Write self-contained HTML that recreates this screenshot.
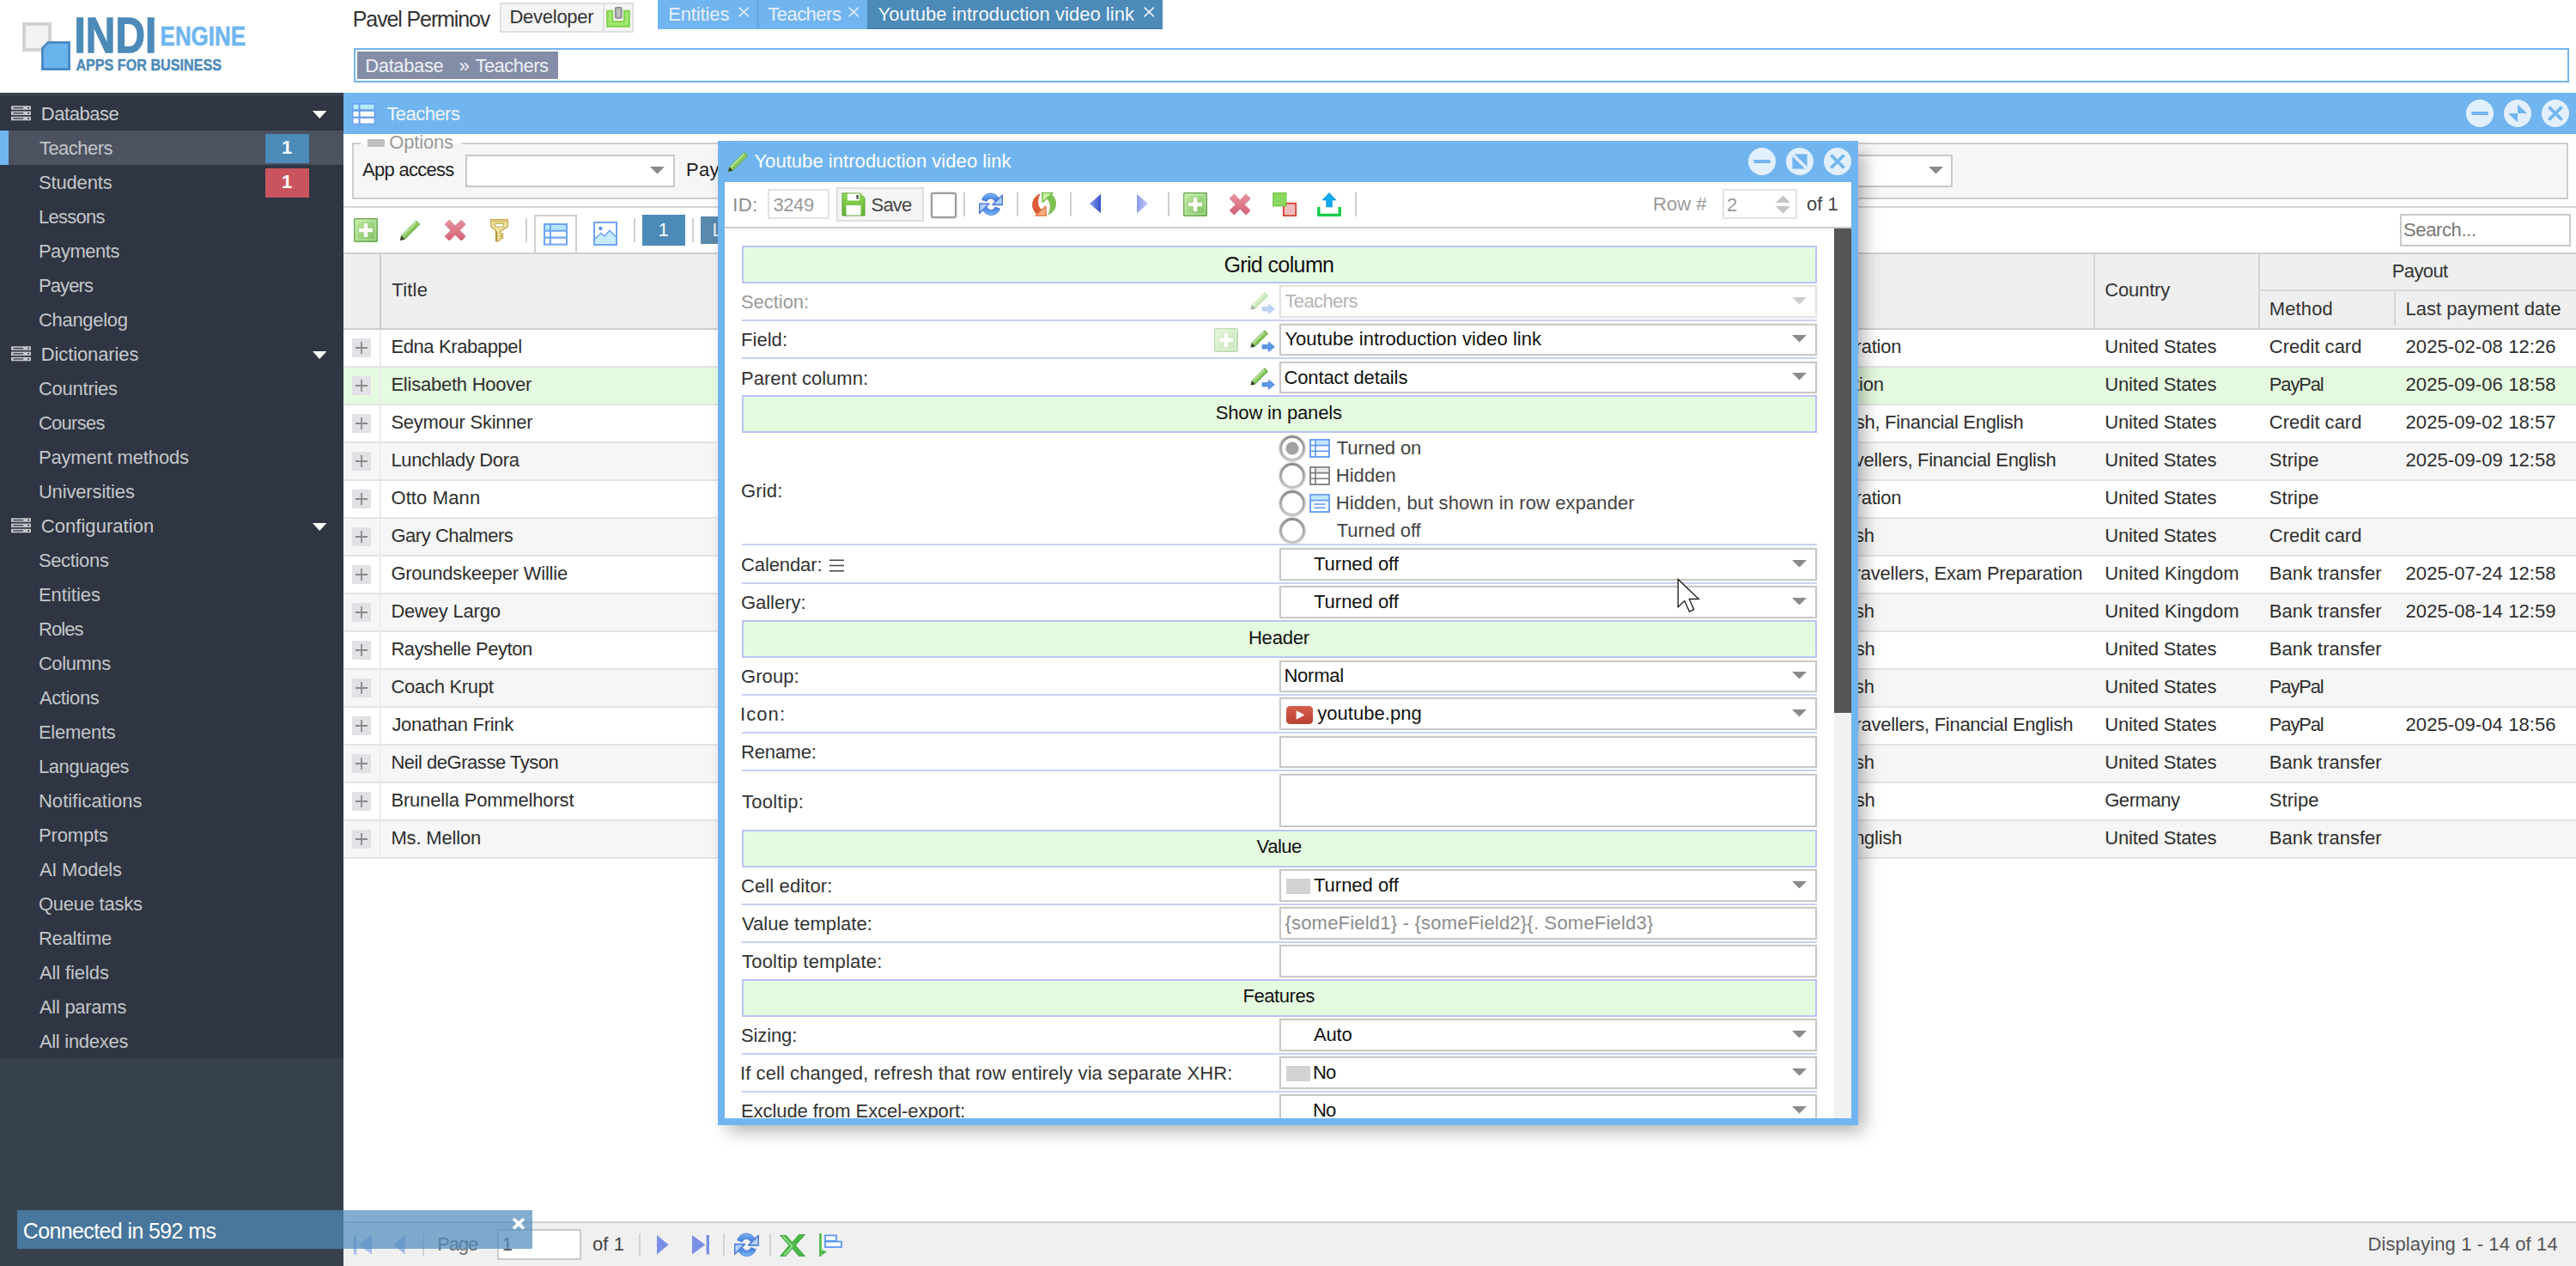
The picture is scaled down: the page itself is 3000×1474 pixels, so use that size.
<!DOCTYPE html>
<html><head><meta charset="utf-8"><title>Teachers</title><style>
html,body{margin:0;padding:0}
body{width:3000px;height:1474px;overflow:hidden;position:relative;background:#fff;font-family:"Liberation Sans", sans-serif;font-size:21px;color:#222}
div,svg{position:absolute;box-sizing:border-box}
.t{white-space:nowrap}
</style></head><body>
<svg width="0" height="0" style="left:0;top:0"><defs>
<linearGradient id="gAdd" x1="0" y1="0" x2="1" y2="1"><stop offset="0" stop-color="#c4efa6"/><stop offset="1" stop-color="#79bd5c"/></linearGradient>
<linearGradient id="gX" x1="0" y1="0" x2="0" y2="1"><stop offset="0" stop-color="#e58a98"/><stop offset="1" stop-color="#cf4e62"/></linearGradient>
<linearGradient id="gPen" x1="0" y1="0" x2="1" y2="1"><stop offset="0" stop-color="#a6e07a"/><stop offset="1" stop-color="#6cb044"/></linearGradient>
<linearGradient id="gKey" x1="0" y1="0" x2="1" y2="1"><stop offset="0" stop-color="#ecd58a"/><stop offset="1" stop-color="#b8964a"/></linearGradient>
<linearGradient id="gSave" x1="0" y1="0" x2="0" y2="1"><stop offset="0" stop-color="#8fdc5a"/><stop offset="1" stop-color="#5fb030"/></linearGradient>
<linearGradient id="gRef" x1="0" y1="0" x2="0" y2="1"><stop offset="0" stop-color="#7ab8f5"/><stop offset="1" stop-color="#3a78dc"/></linearGradient>
<linearGradient id="gTriL" x1="0" y1="0" x2="1" y2="0"><stop offset="0" stop-color="#8aa0ee"/><stop offset="1" stop-color="#3050c8"/></linearGradient>
<linearGradient id="gTriR" x1="0" y1="0" x2="1" y2="0"><stop offset="0" stop-color="#8898ea"/><stop offset="1" stop-color="#c4cef8"/></linearGradient>
<linearGradient id="gRadio" x1="0" y1="0" x2="0" y2="1"><stop offset="0" stop-color="#8c8c8c"/><stop offset="1" stop-color="#c4c4c4"/></linearGradient>
<linearGradient id="gYt" x1="0" y1="0" x2="0" y2="1"><stop offset="0" stop-color="#d4604e"/><stop offset="1" stop-color="#bb3f33"/></linearGradient>
</defs></svg>
<svg style="left:20px;top:15px;" width="280" height="75" viewBox="0 0 280 75" preserveAspectRatio="none"><rect x="8" y="13" width="30" height="30" fill="#f2f2f2" stroke="#d2d2d2" stroke-width="4"/><path d="M36 34.5 H60.5 V65.5 H29.5 V41 Z" fill="#6ab4ee" stroke="#4c8cc4" stroke-width="3" stroke-linejoin="miter"/><text x="66.6" y="46.4" font-family="Liberation Sans" font-weight="bold" font-size="56.8" fill="#4c8ab8" stroke="#4c8ab8" stroke-width="1.3" textLength="95.6" lengthAdjust="spacingAndGlyphs">INDI</text><text x="166.6" y="38.4" font-family="Liberation Sans" font-weight="bold" font-size="31.5" fill="#6eb6f0" stroke="#6eb6f0" stroke-width=".5" textLength="99.4" lengthAdjust="spacingAndGlyphs">ENGINE</text><text x="68.4" y="66.7" font-family="Liberation Sans" font-weight="bold" font-size="18.7" fill="#4c8ab8" stroke="#4c8ab8" stroke-width=".4" textLength="169.6" lengthAdjust="spacingAndGlyphs">APPS FOR BUSINESS</text></svg>
<div class="t" style="top:7.0px;line-height:30px;font-size:25px;color:#333;letter-spacing:-1.121px;left:410.8px;">Pavel Perminov</div>
<div style="left:582px;top:2.5px;width:156px;height:35.5px;background:#f5f5f5;border:2px solid #e0e0e0;"></div>
<div style="left:702px;top:4px;width:2px;height:32.5px;background:#e0e0e0;"></div>
<div class="t" style="top:7.2px;line-height:26px;font-size:22px;color:#333;letter-spacing:-0.269px;left:593.5px;">Developer</div>
<svg style="left:705.9px;top:7.8px;" width="28" height="24" viewBox="0 0 28 24" preserveAspectRatio="none"><path d="M0.8 4.4 H7.6 V16.8 H20.6 V4.4 H27.2 V23.2 H0.8 Z" fill="#8ede58" stroke="#7cd048" stroke-width="1.2" stroke-linejoin="round"/><path d="M3 6.4 H5.6 V19 H22.6 V6.4 H25 V21 H3 Z" fill="#b2f08a" opacity=".7"/><rect x="10.4" y="0.5" width="7.8" height="12.8" rx="1" fill="#a4a4a4" stroke="#848484" stroke-width="1"/><rect x="12.6" y="2.4" width="3.4" height="9" fill="#c4c4c4"/></svg>
<div style="left:766px;top:0px;width:115px;height:33.6px;background:#71b5f0;"></div>
<div style="left:883.5px;top:0px;width:126px;height:33.6px;background:#71b5f0;"></div>
<div style="left:881px;top:0px;width:2.5px;height:33.6px;background:#68a8e2;"></div>
<div style="left:1009.5px;top:0px;width:344.5px;height:33.6px;background:#4c8ab8;"></div>
<div style="left:1009.5px;top:32.8px;width:344.5px;height:1px;background:#4478a4;"></div>
<div class="t" style="top:3.5px;line-height:26px;font-size:22px;color:#e8f0f8;letter-spacing:-0.135px;left:778.2px;">Entities</div>
<svg style="left:859.5px;top:8.1px;" width="12.6" height="12" viewBox="0 0 12.6 12" preserveAspectRatio="none"><path d="M0.6 0.6 L12 11.4 M12 0.6 L0.6 11.4" stroke="#e0ecf8" stroke-width="1.6" fill="none"/></svg>
<div class="t" style="top:3.5px;line-height:26px;font-size:22px;color:#e8f0f8;letter-spacing:-0.51px;left:894.2px;">Teachers</div>
<svg style="left:987.8px;top:8.1px;" width="12.6" height="12" viewBox="0 0 12.6 12" preserveAspectRatio="none"><path d="M0.6 0.6 L12 11.4 M12 0.6 L0.6 11.4" stroke="#e0ecf8" stroke-width="1.6" fill="none"/></svg>
<div class="t" style="top:3.5px;line-height:26px;font-size:22px;color:#f4f8fc;letter-spacing:0.026px;left:1022.5px;">Youtube introduction video link</div>
<svg style="left:1331.8px;top:8.1px;" width="12.6" height="12" viewBox="0 0 12.6 12" preserveAspectRatio="none"><path d="M0.6 0.6 L12 11.4 M12 0.6 L0.6 11.4" stroke="#f0f4fa" stroke-width="1.6" fill="none"/></svg>
<div style="left:411.5px;top:56px;width:2580.5px;height:40px;border:2px solid #71b5f0;background:#fff;"></div>
<div style="left:416.2px;top:60.2px;width:233.6px;height:31.6px;background:#848da8;"></div>
<div class="t" style="top:64.0px;line-height:26px;font-size:22px;color:#eef0f4;letter-spacing:-0.392px;left:425.3px;">Database</div>
<div class="t" style="top:64.0px;line-height:26px;font-size:22px;color:#eef0f4;left:534.6px;">»</div>
<div class="t" style="top:64.0px;line-height:26px;font-size:22px;color:#eef0f4;letter-spacing:-0.51px;left:553.4px;">Teachers</div>
<div style="left:0px;top:108px;width:400px;height:1366px;background:#37414e;"></div>
<div style="left:0px;top:108px;width:400px;height:1124px;background:#2f3542;"></div>
<div style="left:0px;top:108px;width:400px;height:4px;background:#37404d;"></div>
<svg style="left:12.6px;top:122.6px;" width="23" height="18" viewBox="0 0 23 18" preserveAspectRatio="none"><rect x="0" y="0.3" width="23" height="4.5" rx=".5" fill="#c6c8cc"/><rect x="2.3" y="1.85" width="11.9" height="1.4" fill="#3a4150"/><circle cx="20.2" cy="2.55" r="1" fill="#2a303c"/><rect x="0" y="6.5" width="23" height="4.5" rx=".5" fill="#c6c8cc"/><rect x="2.3" y="8.05" width="11.9" height="1.4" fill="#3a4150"/><circle cx="20.2" cy="8.75" r="1" fill="#2a303c"/><rect x="0" y="12.7" width="23" height="4.5" rx=".5" fill="#c6c8cc"/><rect x="2.3" y="14.25" width="11.9" height="1.4" fill="#3a4150"/><circle cx="20.2" cy="14.95" r="1" fill="#2a303c"/></svg>
<div class="t" style="top:119.6px;line-height:26px;font-size:22px;color:#c8cace;letter-spacing:-0.449px;left:47.8px;">Database</div>
<svg style="left:364px;top:129.2px;" width="16.4" height="9" viewBox="0 0 16.4 9" preserveAspectRatio="none"><path d="M0 0 H16.4 L8.2 9 Z" fill="#fff"/></svg>
<div style="left:0px;top:152px;width:400px;height:40px;background:#4c5260;"></div>
<div style="left:0px;top:152px;width:10px;height:40px;background:#71b5f0;"></div>
<div style="left:309px;top:156px;width:51px;height:34px;background:#4c8ab8;"></div>
<div class="t" style="top:159.4px;line-height:26px;font-size:22px;color:#fff;font-weight:bold;left:328.1px;">1</div>
<div class="t" style="top:159.5px;line-height:26px;font-size:22px;color:#c4c6ca;letter-spacing:-0.51px;left:45.9px;">Teachers</div>
<div style="left:309px;top:196px;width:51px;height:34px;background:#c9545d;"></div>
<div class="t" style="top:199.4px;line-height:26px;font-size:22px;color:#fff;font-weight:bold;left:328.1px;">1</div>
<div class="t" style="top:199.5px;line-height:26px;font-size:22px;color:#c4c6ca;letter-spacing:-0.134px;left:44.9px;">Students</div>
<div class="t" style="top:239.5px;line-height:26px;font-size:22px;color:#c4c6ca;letter-spacing:-0.724px;left:44.9px;">Lessons</div>
<div class="t" style="top:279.5px;line-height:26px;font-size:22px;color:#c4c6ca;letter-spacing:-0.46px;left:44.9px;">Payments</div>
<div class="t" style="top:319.5px;line-height:26px;font-size:22px;color:#c4c6ca;letter-spacing:-0.854px;left:44.9px;">Payers</div>
<div class="t" style="top:359.5px;line-height:26px;font-size:22px;color:#c4c6ca;letter-spacing:-0.286px;left:44.9px;">Changelog</div>
<svg style="left:12.6px;top:402.6px;" width="23" height="18" viewBox="0 0 23 18" preserveAspectRatio="none"><rect x="0" y="0.3" width="23" height="4.5" rx=".5" fill="#c6c8cc"/><rect x="2.3" y="1.85" width="11.9" height="1.4" fill="#3a4150"/><circle cx="20.2" cy="2.55" r="1" fill="#2a303c"/><rect x="0" y="6.5" width="23" height="4.5" rx=".5" fill="#c6c8cc"/><rect x="2.3" y="8.05" width="11.9" height="1.4" fill="#3a4150"/><circle cx="20.2" cy="8.75" r="1" fill="#2a303c"/><rect x="0" y="12.7" width="23" height="4.5" rx=".5" fill="#c6c8cc"/><rect x="2.3" y="14.25" width="11.9" height="1.4" fill="#3a4150"/><circle cx="20.2" cy="14.95" r="1" fill="#2a303c"/></svg>
<div class="t" style="top:399.6px;line-height:26px;font-size:22px;color:#c8cace;letter-spacing:-0.121px;left:47.8px;">Dictionaries</div>
<svg style="left:364px;top:409.2px;" width="16.4" height="9" viewBox="0 0 16.4 9" preserveAspectRatio="none"><path d="M0 0 H16.4 L8.2 9 Z" fill="#fff"/></svg>
<div class="t" style="top:439.5px;line-height:26px;font-size:22px;color:#c4c6ca;letter-spacing:-0.244px;left:44.9px;">Countries</div>
<div class="t" style="top:479.5px;line-height:26px;font-size:22px;color:#c4c6ca;letter-spacing:-0.72px;left:44.9px;">Courses</div>
<div class="t" style="top:519.5px;line-height:26px;font-size:22px;color:#c4c6ca;letter-spacing:-0.151px;left:44.9px;">Payment methods</div>
<div class="t" style="top:559.5px;line-height:26px;font-size:22px;color:#c4c6ca;letter-spacing:-0.154px;left:44.9px;">Universities</div>
<svg style="left:12.6px;top:602.6px;" width="23" height="18" viewBox="0 0 23 18" preserveAspectRatio="none"><rect x="0" y="0.3" width="23" height="4.5" rx=".5" fill="#c6c8cc"/><rect x="2.3" y="1.85" width="11.9" height="1.4" fill="#3a4150"/><circle cx="20.2" cy="2.55" r="1" fill="#2a303c"/><rect x="0" y="6.5" width="23" height="4.5" rx=".5" fill="#c6c8cc"/><rect x="2.3" y="8.05" width="11.9" height="1.4" fill="#3a4150"/><circle cx="20.2" cy="8.75" r="1" fill="#2a303c"/><rect x="0" y="12.7" width="23" height="4.5" rx=".5" fill="#c6c8cc"/><rect x="2.3" y="14.25" width="11.9" height="1.4" fill="#3a4150"/><circle cx="20.2" cy="14.95" r="1" fill="#2a303c"/></svg>
<div class="t" style="top:599.6px;line-height:26px;font-size:22px;color:#c8cace;letter-spacing:0.04px;left:47.8px;">Configuration</div>
<svg style="left:364px;top:609.2px;" width="16.4" height="9" viewBox="0 0 16.4 9" preserveAspectRatio="none"><path d="M0 0 H16.4 L8.2 9 Z" fill="#fff"/></svg>
<div class="t" style="top:639.5px;line-height:26px;font-size:22px;color:#c4c6ca;letter-spacing:-0.34px;left:44.9px;">Sections</div>
<div class="t" style="top:679.5px;line-height:26px;font-size:22px;color:#c4c6ca;letter-spacing:-0.006px;left:44.9px;">Entities</div>
<div class="t" style="top:719.5px;line-height:26px;font-size:22px;color:#c4c6ca;letter-spacing:-0.887px;left:44.9px;">Roles</div>
<div class="t" style="top:759.5px;line-height:26px;font-size:22px;color:#c4c6ca;letter-spacing:-0.418px;left:44.9px;">Columns</div>
<div class="t" style="top:799.5px;line-height:26px;font-size:22px;color:#c4c6ca;letter-spacing:-0.374px;left:45.9px;">Actions</div>
<div class="t" style="top:839.5px;line-height:26px;font-size:22px;color:#c4c6ca;letter-spacing:-0.258px;left:44.9px;">Elements</div>
<div class="t" style="top:879.5px;line-height:26px;font-size:22px;color:#c4c6ca;letter-spacing:-0.398px;left:44.9px;">Languages</div>
<div class="t" style="top:919.5px;line-height:26px;font-size:22px;color:#c4c6ca;letter-spacing:0.073px;left:44.9px;">Notifications</div>
<div class="t" style="top:959.5px;line-height:26px;font-size:22px;color:#c4c6ca;letter-spacing:-0.118px;left:44.9px;">Prompts</div>
<div class="t" style="top:999.5px;line-height:26px;font-size:22px;color:#c4c6ca;letter-spacing:-0.227px;left:45.9px;">AI Models</div>
<div class="t" style="top:1039.5px;line-height:26px;font-size:22px;color:#c4c6ca;letter-spacing:-0.251px;left:44.9px;">Queue tasks</div>
<div class="t" style="top:1079.5px;line-height:26px;font-size:22px;color:#c4c6ca;letter-spacing:-0.21px;left:44.9px;">Realtime</div>
<div class="t" style="top:1119.5px;line-height:26px;font-size:22px;color:#c4c6ca;letter-spacing:-0.102px;left:45.9px;">All fields</div>
<div class="t" style="top:1159.5px;line-height:26px;font-size:22px;color:#c4c6ca;letter-spacing:-0.269px;left:45.9px;">All params</div>
<div class="t" style="top:1199.5px;line-height:26px;font-size:22px;color:#c4c6ca;letter-spacing:-0.289px;left:45.9px;">All indexes</div>
<div style="left:400px;top:108px;width:2600px;height:48px;background:#71b5f0;"></div>
<svg style="left:410px;top:120.3px;" width="27.2" height="25" viewBox="0 0 27.2 25" preserveAspectRatio="none"><rect x="0" y="0" width="27.2" height="25" rx="1.6" fill="#6a9cf4" opacity=".92"/><rect x="1.5" y="1.7" width="6" height="5.5" fill="#b6ecfc"/><rect x="9.6" y="1.7" width="16" height="5.5" fill="#b6ecfc"/><rect x="1.5" y="9.8" width="6" height="5.8" fill="#fff"/><rect x="9.6" y="9.8" width="16" height="5.8" fill="#fff"/><rect x="1.5" y="17.9" width="6" height="5.7" fill="#fff"/><rect x="9.6" y="17.9" width="16" height="5.7" fill="#fff"/></svg>
<div class="t" style="top:119.6px;line-height:26px;font-size:22px;color:#f2f6fa;letter-spacing:-0.538px;left:450.4px;">Teachers</div>
<svg style="left:2872px;top:115.9px;" width="32" height="32" viewBox="0 0 32 32" preserveAspectRatio="none"><circle cx="16" cy="16" r="16" fill="#e2effc"/><path d="M6.4 16 H25.6" stroke="#71b5f0" stroke-width="4"/></svg>
<svg style="left:2916px;top:115.9px;" width="32" height="32" viewBox="0 0 32 32" preserveAspectRatio="none"><circle cx="16" cy="16" r="16" fill="#e2effc"/><path d="M16 5.4 L27 16 H16 Z M16 26.6 L5 16 H16 Z" fill="#71b5f0"/></svg>
<svg style="left:2960px;top:115.9px;" width="32" height="32" viewBox="0 0 32 32" preserveAspectRatio="none"><circle cx="16" cy="16" r="16" fill="#e2effc"/><path d="M8.4 8.4 L23.6 23.6 M23.6 8.4 L8.4 23.6" stroke="#71b5f0" stroke-width="3.6"/></svg>
<div style="left:410px;top:166px;width:2580.5px;height:65.6px;background:#f6f6f6;border:2px solid #cdcdcd;"></div>
<div style="left:420px;top:160px;width:118px;height:14px;background:linear-gradient(#fff 0,#fff 7px,#f6f6f6 7px);"></div>
<div style="left:428px;top:162.4px;width:20px;height:9px;background:#c0c0c0;"></div>
<div class="t" style="top:153.4px;line-height:26px;font-size:22px;color:#9a9a9a;letter-spacing:-0.186px;left:453.3px;">Options</div>
<div class="t" style="top:185.2px;line-height:26px;font-size:22px;color:#222;letter-spacing:-0.714px;left:422.0px;">App access</div>
<div style="left:542px;top:180px;width:244px;height:38px;background:#fff;border:2px solid #c8c8c8;"></div>
<svg style="left:757.4px;top:194.4px;" width="17" height="8.6" viewBox="0 0 17 8.6" preserveAspectRatio="none"><path d="M0 0 H17 L8.5 8.6 Z" fill="#8a8a8a"/></svg>
<div class="t" style="top:185.2px;line-height:26px;font-size:22px;color:#222;letter-spacing:0.3px;left:799.0px;">Payout method</div>
<div style="left:2030px;top:180px;width:244px;height:38px;background:#fff;border:2px solid #c8c8c8;"></div>
<svg style="left:2245.6px;top:194.4px;" width="17" height="8.6" viewBox="0 0 17 8.6" preserveAspectRatio="none"><path d="M0 0 H17 L8.5 8.6 Z" fill="#8a8a8a"/></svg>
<div style="left:400px;top:240px;width:2600px;height:2px;background:#d6d6d6;"></div>
<svg style="left:411.6px;top:254px;" width="28" height="28" viewBox="0 0 28 28" preserveAspectRatio="none"><g opacity="1"><rect x="0.5" y="0.5" width="27" height="27" rx="2" fill="url(#gAdd)" stroke="#6ea858" stroke-width="1.4"/><rect x="3" y="3" width="22" height="22" fill="none" stroke="#d4f4c0" stroke-width="1" opacity=".7"/><path d="M11.3 5.5h5.4v5.8h5.8v5.4h-5.8v5.8h-5.4v-5.8H5.5v-5.4h5.8z" fill="#fff" stroke="#8cc870" stroke-width=".8"/></g></svg>
<svg style="left:465px;top:255.6px;" width="25" height="25" viewBox="0 0 25 25" preserveAspectRatio="none"><path d="M1.2 23.8 L2.4 18.6 L19.8 1.2 L23.8 5.2 L6.4 22.6 Z" fill="url(#gPen)" stroke="#6aa848" stroke-width="1"/><path d="M1.2 23.8 L2.4 18.6 L6.4 22.6 Z" fill="#3a3a3a"/><path d="M4 18.5 L19.5 3" stroke="#c9f0a8" stroke-width="1.3" fill="none"/></svg>
<svg style="left:517.8px;top:255.9px;" width="24.4" height="24.4" viewBox="0 0 24.3 24.3" preserveAspectRatio="none"><path d="M5.2 0 L12.15 6.95 L19.1 0 L24.3 5.2 L17.35 12.15 L24.3 19.1 L19.1 24.3 L12.15 17.35 L5.2 24.3 L0 19.1 L6.95 12.15 L0 5.2 Z" fill="url(#gX)" stroke="#d4566e" stroke-width=".6" opacity=".9"/></svg>
<svg style="left:571.4px;top:255.4px;" width="21" height="27" viewBox="0 0 21 27" preserveAspectRatio="none"><path d="M0.7 0.7 H20.3 V8.6 L13 13.6 L11.2 14.8 V16 L14.6 17.2 V18.8 L11.2 19.4 L14.6 20.6 V22.2 L11.2 23 L10.8 25 L7.4 26.4 L6.4 25.6 V13.8 L0.7 8.6 Z" fill="#f0e29c" stroke="#c6a652" stroke-width="1.3" stroke-linejoin="round"/><path d="M2.4 2.6 H18.6" stroke="#d8bc68" stroke-width="1.6"/><rect x="5.6" y="5.4" width="9.8" height="3.6" rx="1" fill="#fff" stroke="#b8b458" stroke-width="1.2"/><path d="M7.4 14.4 V25.4" stroke="#a89048" stroke-width="1.5"/></svg>
<div style="left:612px;top:254.3px;width:2px;height:27.7px;background:#cfcfcf;"></div>
<div style="left:622px;top:250.2px;width:49.6px;height:46px;border:2px solid #cfcfcf;border-bottom:none;background:#fff;"></div>
<svg style="left:633px;top:259.9px;" width="28" height="25.7" viewBox="0 0 28 25" preserveAspectRatio="none"><rect x="1" y="1" width="26" height="23" fill="#fff" stroke="#6ea4f8" stroke-width="2"/><rect x="2" y="2" width="24" height="6" fill="#b4e8ff"/><path d="M8 1 V24 M1 8.6 H27 M1 16.2 H27" stroke="#6ea4f8" stroke-width="2" fill="none"/></svg>
<svg style="left:691px;top:258px;" width="28" height="28" viewBox="0 0 28 28" preserveAspectRatio="none"><rect x="1" y="1" width="26" height="26" fill="#fff" stroke="#6ea4f8" stroke-width="2"/><path d="M2 20 L9 13.5 L13 17 L19 10.5 L26 17.5 V26 H2 Z" fill="#c8ecff"/><path d="M2 20 L9 13.5 L13 17 L19 10.5 L26 17.5" fill="none" stroke="#6ea4f8" stroke-width="1.6"/><circle cx="8.4" cy="8" r="2.2" fill="#5a94f4"/></svg>
<div style="left:738px;top:254.3px;width:2px;height:27.7px;background:#cfcfcf;"></div>
<div style="left:748px;top:250px;width:49.8px;height:35.6px;background:#4c8ab8;"></div>
<div class="t" style="top:255.2px;line-height:26px;font-size:22px;color:#fff;left:766.5px;">1</div>
<div style="left:806px;top:254.3px;width:2px;height:27.7px;background:#cfcfcf;"></div>
<div style="left:816px;top:252.1px;width:60px;height:31.8px;background:#5a8aae;"></div>
<div class="t" style="top:255.2px;line-height:26px;font-size:22px;color:#eef2f6;left:829.5px;">L</div>
<div style="left:2794.5px;top:248.8px;width:199px;height:38.2px;background:#fff;border:2px solid #cacaca;"></div>
<div class="t" style="top:255.4px;line-height:26px;font-size:22px;color:#777;letter-spacing:-0.379px;left:2799.0px;">Search...</div>
<div style="left:400px;top:293.6px;width:2600px;height:90.6px;background:#efefef;border-top:2px solid #cfcfcf;border-bottom:2.2px solid #cdcdcd;"></div>
<div style="left:441.6px;top:295px;width:2px;height:87px;background:#cdcdcd;"></div>
<div class="t" style="top:325.0px;line-height:26px;font-size:22px;color:#333;letter-spacing:0.223px;left:456.3px;">Title</div>
<div style="left:2437.6px;top:295px;width:2px;height:87px;background:#d4d4d4;"></div>
<div class="t" style="top:325.0px;line-height:26px;font-size:22px;color:#333;letter-spacing:-0.155px;left:2451.2px;">Country</div>
<div style="left:2629.8px;top:295px;width:2px;height:87px;background:#d4d4d4;"></div>
<div class="t" style="top:303.4px;line-height:26px;font-size:22px;color:#333;letter-spacing:-0.596px;left:2785.7px;">Payout</div>
<div style="left:2631px;top:337.4px;width:369px;height:2px;background:#d8d8d8;"></div>
<div class="t" style="top:347.2px;line-height:26px;font-size:22px;color:#333;letter-spacing:0.131px;left:2642.8px;">Method</div>
<div style="left:2787.8px;top:340px;width:2px;height:40px;background:#d4d4d4;"></div>
<div class="t" style="top:347.2px;line-height:26px;font-size:22px;color:#333;letter-spacing:-0.004px;left:2801.5px;">Last payment date</div>
<div style="left:400px;top:383.9px;width:2600px;height:44px;background:#fff;border-bottom:2px solid #e4e4e4;"></div>
<div style="left:441.6px;top:383.9px;width:2px;height:43px;background:#ececec;"></div>
<div style="left:410px;top:393.9px;width:22px;height:22px;background:#e2e2e6;"></div>
<svg style="left:414px;top:397.9px;" width="14" height="14" viewBox="0 0 14 14" preserveAspectRatio="none"><path d="M7 0 V14 M0 7 H14" stroke="#8a8a8a" stroke-width="1.8"/></svg>
<div class="t" style="top:390.7px;line-height:26px;font-size:22px;color:#2e2e2e;letter-spacing:-0.393px;left:455.4px;">Edna Krabappel</div>
<div class="t" style="top:390.7px;line-height:26px;font-size:22px;color:#2e2e2e;letter-spacing:-0.217px;left:2041.7px;">Exam Preparation</div>
<div class="t" style="top:390.7px;line-height:26px;font-size:22px;color:#2e2e2e;letter-spacing:-0.156px;left:2451.2px;">United States</div>
<div class="t" style="top:390.7px;line-height:26px;font-size:22px;color:#2e2e2e;letter-spacing:0.004px;left:2642.8px;">Credit card</div>
<div class="t" style="top:390.7px;line-height:26px;font-size:22px;color:#2e2e2e;letter-spacing:0.089px;left:2801.5px;">2025-02-08 12:26</div>
<div style="left:400px;top:427.9px;width:2600px;height:44px;background:#e5fbe0;border-bottom:2px solid #e4e4e4;"></div>
<div style="left:441.6px;top:427.9px;width:2px;height:43px;background:#ececec;"></div>
<div style="left:410px;top:437.9px;width:22px;height:22px;background:#e2e2e6;"></div>
<svg style="left:414px;top:441.9px;" width="14" height="14" viewBox="0 0 14 14" preserveAspectRatio="none"><path d="M7 0 V14 M0 7 H14" stroke="#8a8a8a" stroke-width="1.8"/></svg>
<div class="t" style="top:434.7px;line-height:26px;font-size:22px;color:#2e2e2e;letter-spacing:-0.234px;left:455.4px;">Elisabeth Hoover</div>
<div class="t" style="top:434.7px;line-height:26px;font-size:22px;color:#2e2e2e;letter-spacing:-0.217px;left:2021.1px;">Exam Preparation</div>
<div class="t" style="top:434.7px;line-height:26px;font-size:22px;color:#2e2e2e;letter-spacing:-0.156px;left:2451.2px;">United States</div>
<div class="t" style="top:434.7px;line-height:26px;font-size:22px;color:#2e2e2e;letter-spacing:-1.164px;left:2642.8px;">PayPal</div>
<div class="t" style="top:434.7px;line-height:26px;font-size:22px;color:#2e2e2e;letter-spacing:0.089px;left:2801.5px;">2025-09-06 18:58</div>
<div style="left:400px;top:471.9px;width:2600px;height:44px;background:#fff;border-bottom:2px solid #e4e4e4;"></div>
<div style="left:441.6px;top:471.9px;width:2px;height:43px;background:#ececec;"></div>
<div style="left:410px;top:481.9px;width:22px;height:22px;background:#e2e2e6;"></div>
<svg style="left:414px;top:485.9px;" width="14" height="14" viewBox="0 0 14 14" preserveAspectRatio="none"><path d="M7 0 V14 M0 7 H14" stroke="#8a8a8a" stroke-width="1.8"/></svg>
<div class="t" style="top:478.7px;line-height:26px;font-size:22px;color:#2e2e2e;letter-spacing:-0.258px;left:455.4px;">Seymour Skinner</div>
<div class="t" style="top:478.7px;line-height:26px;font-size:22px;color:#2e2e2e;letter-spacing:-0.292px;left:2020.6px;">Business English, Financial English</div>
<div class="t" style="top:478.7px;line-height:26px;font-size:22px;color:#2e2e2e;letter-spacing:-0.156px;left:2451.2px;">United States</div>
<div class="t" style="top:478.7px;line-height:26px;font-size:22px;color:#2e2e2e;letter-spacing:0.004px;left:2642.8px;">Credit card</div>
<div class="t" style="top:478.7px;line-height:26px;font-size:22px;color:#2e2e2e;letter-spacing:0.089px;left:2801.5px;">2025-09-02 18:57</div>
<div style="left:400px;top:515.9px;width:2600px;height:44px;background:#f6f6f6;border-bottom:2px solid #e4e4e4;"></div>
<div style="left:441.6px;top:515.9px;width:2px;height:43px;background:#ececec;"></div>
<div style="left:410px;top:525.9px;width:22px;height:22px;background:#e2e2e6;"></div>
<svg style="left:414px;top:529.9px;" width="14" height="14" viewBox="0 0 14 14" preserveAspectRatio="none"><path d="M7 0 V14 M0 7 H14" stroke="#8a8a8a" stroke-width="1.8"/></svg>
<div class="t" style="top:522.7px;line-height:26px;font-size:22px;color:#2e2e2e;letter-spacing:-0.351px;left:455.4px;">Lunchlady Dora</div>
<div class="t" style="top:522.7px;line-height:26px;font-size:22px;color:#2e2e2e;letter-spacing:-0.292px;left:2022.4px;">English for Travellers, Financial English</div>
<div class="t" style="top:522.7px;line-height:26px;font-size:22px;color:#2e2e2e;letter-spacing:-0.156px;left:2451.2px;">United States</div>
<div class="t" style="top:522.7px;line-height:26px;font-size:22px;color:#2e2e2e;letter-spacing:0.033px;left:2642.8px;">Stripe</div>
<div class="t" style="top:522.7px;line-height:26px;font-size:22px;color:#2e2e2e;letter-spacing:0.089px;left:2801.5px;">2025-09-09 12:58</div>
<div style="left:400px;top:559.9px;width:2600px;height:44px;background:#fff;border-bottom:2px solid #e4e4e4;"></div>
<div style="left:441.6px;top:559.9px;width:2px;height:43px;background:#ececec;"></div>
<div style="left:410px;top:569.9px;width:22px;height:22px;background:#e2e2e6;"></div>
<svg style="left:414px;top:573.9px;" width="14" height="14" viewBox="0 0 14 14" preserveAspectRatio="none"><path d="M7 0 V14 M0 7 H14" stroke="#8a8a8a" stroke-width="1.8"/></svg>
<div class="t" style="top:566.7px;line-height:26px;font-size:22px;color:#2e2e2e;letter-spacing:0.127px;left:455.4px;">Otto Mann</div>
<div class="t" style="top:566.7px;line-height:26px;font-size:22px;color:#2e2e2e;letter-spacing:-0.217px;left:2041.7px;">Exam Preparation</div>
<div class="t" style="top:566.7px;line-height:26px;font-size:22px;color:#2e2e2e;letter-spacing:-0.156px;left:2451.2px;">United States</div>
<div class="t" style="top:566.7px;line-height:26px;font-size:22px;color:#2e2e2e;letter-spacing:0.033px;left:2642.8px;">Stripe</div>
<div style="left:400px;top:603.9px;width:2600px;height:44px;background:#f6f6f6;border-bottom:2px solid #e4e4e4;"></div>
<div style="left:441.6px;top:603.9px;width:2px;height:43px;background:#ececec;"></div>
<div style="left:410px;top:613.9px;width:22px;height:22px;background:#e2e2e6;"></div>
<svg style="left:414px;top:617.9px;" width="14" height="14" viewBox="0 0 14 14" preserveAspectRatio="none"><path d="M7 0 V14 M0 7 H14" stroke="#8a8a8a" stroke-width="1.8"/></svg>
<div class="t" style="top:610.7px;line-height:26px;font-size:22px;color:#2e2e2e;letter-spacing:-0.46px;left:455.4px;">Gary Chalmers</div>
<div class="t" style="top:610.7px;line-height:26px;font-size:22px;color:#2e2e2e;letter-spacing:-0.287px;left:2019.8px;">Business English</div>
<div class="t" style="top:610.7px;line-height:26px;font-size:22px;color:#2e2e2e;letter-spacing:-0.156px;left:2451.2px;">United States</div>
<div class="t" style="top:610.7px;line-height:26px;font-size:22px;color:#2e2e2e;letter-spacing:0.004px;left:2642.8px;">Credit card</div>
<div style="left:400px;top:647.9px;width:2600px;height:44px;background:#fff;border-bottom:2px solid #e4e4e4;"></div>
<div style="left:441.6px;top:647.9px;width:2px;height:43px;background:#ececec;"></div>
<div style="left:410px;top:657.9px;width:22px;height:22px;background:#e2e2e6;"></div>
<svg style="left:414px;top:661.9px;" width="14" height="14" viewBox="0 0 14 14" preserveAspectRatio="none"><path d="M7 0 V14 M0 7 H14" stroke="#8a8a8a" stroke-width="1.8"/></svg>
<div class="t" style="top:654.7px;line-height:26px;font-size:22px;color:#2e2e2e;letter-spacing:-0.241px;left:455.4px;">Groundskeeper Willie</div>
<div class="t" style="top:654.7px;line-height:26px;font-size:22px;color:#2e2e2e;letter-spacing:-0.217px;left:2040.2px;">English for Travellers, Exam Preparation</div>
<div class="t" style="top:654.7px;line-height:26px;font-size:22px;color:#2e2e2e;letter-spacing:-0.016px;left:2451.2px;">United Kingdom</div>
<div class="t" style="top:654.7px;line-height:26px;font-size:22px;color:#2e2e2e;letter-spacing:-0.001px;left:2642.8px;">Bank transfer</div>
<div class="t" style="top:654.7px;line-height:26px;font-size:22px;color:#2e2e2e;letter-spacing:0.089px;left:2801.5px;">2025-07-24 12:58</div>
<div style="left:400px;top:691.9px;width:2600px;height:44px;background:#f6f6f6;border-bottom:2px solid #e4e4e4;"></div>
<div style="left:441.6px;top:691.9px;width:2px;height:43px;background:#ececec;"></div>
<div style="left:410px;top:701.9px;width:22px;height:22px;background:#e2e2e6;"></div>
<svg style="left:414px;top:705.9px;" width="14" height="14" viewBox="0 0 14 14" preserveAspectRatio="none"><path d="M7 0 V14 M0 7 H14" stroke="#8a8a8a" stroke-width="1.8"/></svg>
<div class="t" style="top:698.7px;line-height:26px;font-size:22px;color:#2e2e2e;letter-spacing:-0.209px;left:455.4px;">Dewey Largo</div>
<div class="t" style="top:698.7px;line-height:26px;font-size:22px;color:#2e2e2e;letter-spacing:-0.287px;left:2019.8px;">Business English</div>
<div class="t" style="top:698.7px;line-height:26px;font-size:22px;color:#2e2e2e;letter-spacing:-0.016px;left:2451.2px;">United Kingdom</div>
<div class="t" style="top:698.7px;line-height:26px;font-size:22px;color:#2e2e2e;letter-spacing:-0.001px;left:2642.8px;">Bank transfer</div>
<div class="t" style="top:698.7px;line-height:26px;font-size:22px;color:#2e2e2e;letter-spacing:0.089px;left:2801.5px;">2025-08-14 12:59</div>
<div style="left:400px;top:735.9px;width:2600px;height:44px;background:#fff;border-bottom:2px solid #e4e4e4;"></div>
<div style="left:441.6px;top:735.9px;width:2px;height:43px;background:#ececec;"></div>
<div style="left:410px;top:745.9px;width:22px;height:22px;background:#e2e2e6;"></div>
<svg style="left:414px;top:749.9px;" width="14" height="14" viewBox="0 0 14 14" preserveAspectRatio="none"><path d="M7 0 V14 M0 7 H14" stroke="#8a8a8a" stroke-width="1.8"/></svg>
<div class="t" style="top:742.7px;line-height:26px;font-size:22px;color:#2e2e2e;letter-spacing:-0.418px;left:455.4px;">Rayshelle Peyton</div>
<div class="t" style="top:742.7px;line-height:26px;font-size:22px;color:#2e2e2e;letter-spacing:-0.287px;left:2020.4px;">Business English</div>
<div class="t" style="top:742.7px;line-height:26px;font-size:22px;color:#2e2e2e;letter-spacing:-0.156px;left:2451.2px;">United States</div>
<div class="t" style="top:742.7px;line-height:26px;font-size:22px;color:#2e2e2e;letter-spacing:-0.001px;left:2642.8px;">Bank transfer</div>
<div style="left:400px;top:779.9px;width:2600px;height:44px;background:#f6f6f6;border-bottom:2px solid #e4e4e4;"></div>
<div style="left:441.6px;top:779.9px;width:2px;height:43px;background:#ececec;"></div>
<div style="left:410px;top:789.9px;width:22px;height:22px;background:#e2e2e6;"></div>
<svg style="left:414px;top:793.9px;" width="14" height="14" viewBox="0 0 14 14" preserveAspectRatio="none"><path d="M7 0 V14 M0 7 H14" stroke="#8a8a8a" stroke-width="1.8"/></svg>
<div class="t" style="top:786.7px;line-height:26px;font-size:22px;color:#2e2e2e;letter-spacing:-0.278px;left:455.4px;">Coach Krupt</div>
<div class="t" style="top:786.7px;line-height:26px;font-size:22px;color:#2e2e2e;letter-spacing:-0.287px;left:2019.8px;">Business English</div>
<div class="t" style="top:786.7px;line-height:26px;font-size:22px;color:#2e2e2e;letter-spacing:-0.156px;left:2451.2px;">United States</div>
<div class="t" style="top:786.7px;line-height:26px;font-size:22px;color:#2e2e2e;letter-spacing:-1.164px;left:2642.8px;">PayPal</div>
<div style="left:400px;top:823.9px;width:2600px;height:44px;background:#fff;border-bottom:2px solid #e4e4e4;"></div>
<div style="left:441.6px;top:823.9px;width:2px;height:43px;background:#ececec;"></div>
<div style="left:410px;top:833.9px;width:22px;height:22px;background:#e2e2e6;"></div>
<svg style="left:414px;top:837.9px;" width="14" height="14" viewBox="0 0 14 14" preserveAspectRatio="none"><path d="M7 0 V14 M0 7 H14" stroke="#8a8a8a" stroke-width="1.8"/></svg>
<div class="t" style="top:830.7px;line-height:26px;font-size:22px;color:#2e2e2e;letter-spacing:-0.279px;left:456.4px;">Jonathan Frink</div>
<div class="t" style="top:830.7px;line-height:26px;font-size:22px;color:#2e2e2e;letter-spacing:-0.292px;left:2042.1px;">English for Travellers, Financial English</div>
<div class="t" style="top:830.7px;line-height:26px;font-size:22px;color:#2e2e2e;letter-spacing:-0.156px;left:2451.2px;">United States</div>
<div class="t" style="top:830.7px;line-height:26px;font-size:22px;color:#2e2e2e;letter-spacing:-1.164px;left:2642.8px;">PayPal</div>
<div class="t" style="top:830.7px;line-height:26px;font-size:22px;color:#2e2e2e;letter-spacing:0.089px;left:2801.5px;">2025-09-04 18:56</div>
<div style="left:400px;top:867.9px;width:2600px;height:44px;background:#f6f6f6;border-bottom:2px solid #e4e4e4;"></div>
<div style="left:441.6px;top:867.9px;width:2px;height:43px;background:#ececec;"></div>
<div style="left:410px;top:877.9px;width:22px;height:22px;background:#e2e2e6;"></div>
<svg style="left:414px;top:881.9px;" width="14" height="14" viewBox="0 0 14 14" preserveAspectRatio="none"><path d="M7 0 V14 M0 7 H14" stroke="#8a8a8a" stroke-width="1.8"/></svg>
<div class="t" style="top:874.7px;line-height:26px;font-size:22px;color:#2e2e2e;letter-spacing:-0.47px;left:455.4px;">Neil deGrasse Tyson</div>
<div class="t" style="top:874.7px;line-height:26px;font-size:22px;color:#2e2e2e;letter-spacing:-0.287px;left:2019.8px;">Business English</div>
<div class="t" style="top:874.7px;line-height:26px;font-size:22px;color:#2e2e2e;letter-spacing:-0.156px;left:2451.2px;">United States</div>
<div class="t" style="top:874.7px;line-height:26px;font-size:22px;color:#2e2e2e;letter-spacing:-0.001px;left:2642.8px;">Bank transfer</div>
<div style="left:400px;top:911.9px;width:2600px;height:44px;background:#fff;border-bottom:2px solid #e4e4e4;"></div>
<div style="left:441.6px;top:911.9px;width:2px;height:43px;background:#ececec;"></div>
<div style="left:410px;top:921.9px;width:22px;height:22px;background:#e2e2e6;"></div>
<svg style="left:414px;top:925.9px;" width="14" height="14" viewBox="0 0 14 14" preserveAspectRatio="none"><path d="M7 0 V14 M0 7 H14" stroke="#8a8a8a" stroke-width="1.8"/></svg>
<div class="t" style="top:918.7px;line-height:26px;font-size:22px;color:#2e2e2e;letter-spacing:-0.174px;left:455.4px;">Brunella Pommelhorst</div>
<div class="t" style="top:918.7px;line-height:26px;font-size:22px;color:#2e2e2e;letter-spacing:-0.287px;left:2020.4px;">Business English</div>
<div class="t" style="top:918.7px;line-height:26px;font-size:22px;color:#2e2e2e;letter-spacing:-0.428px;left:2451.2px;">Germany</div>
<div class="t" style="top:918.7px;line-height:26px;font-size:22px;color:#2e2e2e;letter-spacing:0.033px;left:2642.8px;">Stripe</div>
<div style="left:400px;top:955.9px;width:2600px;height:44px;background:#f6f6f6;border-bottom:2px solid #e4e4e4;"></div>
<div style="left:441.6px;top:955.9px;width:2px;height:43px;background:#ececec;"></div>
<div style="left:410px;top:965.9px;width:22px;height:22px;background:#e2e2e6;"></div>
<svg style="left:414px;top:969.9px;" width="14" height="14" viewBox="0 0 14 14" preserveAspectRatio="none"><path d="M7 0 V14 M0 7 H14" stroke="#8a8a8a" stroke-width="1.8"/></svg>
<div class="t" style="top:962.7px;line-height:26px;font-size:22px;color:#2e2e2e;letter-spacing:-0.169px;left:455.4px;">Ms. Mellon</div>
<div class="t" style="top:962.7px;line-height:26px;font-size:22px;color:#2e2e2e;letter-spacing:-0.287px;left:2062.7px;">General English</div>
<div class="t" style="top:962.7px;line-height:26px;font-size:22px;color:#2e2e2e;letter-spacing:-0.156px;left:2451.2px;">United States</div>
<div class="t" style="top:962.7px;line-height:26px;font-size:22px;color:#2e2e2e;letter-spacing:-0.001px;left:2642.8px;">Bank transfer</div>
<div style="left:400px;top:1421.6px;width:2600px;height:53px;background:#f0f0f0;border-top:2px solid #cfcfcf;"></div>
<div style="left:836px;top:164px;width:1328px;height:1146px;background:#71b5f0;box-shadow:9px 9px 20px -3px rgba(0,0,0,.33);"></div>
<div class="dlg" style="left:844px;top:212px;width:1312px;height:1090px;background:#fff;overflow:hidden;"></div>
<svg style="left:847.4px;top:175.8px;" width="25" height="25" viewBox="0 0 25 25" preserveAspectRatio="none"><path d="M1.2 23.8 L2.4 18.6 L19.8 1.2 L23.8 5.2 L6.4 22.6 Z" fill="url(#gPen)" stroke="#6aa848" stroke-width="1"/><path d="M1.2 23.8 L2.4 18.6 L6.4 22.6 Z" fill="#3a3a3a"/><path d="M4 18.5 L19.5 3" stroke="#c9f0a8" stroke-width="1.3" fill="none"/></svg>
<div class="t" style="top:174.8px;line-height:26px;font-size:22px;color:#fff;letter-spacing:0.049px;left:878.4px;">Youtube introduction video link</div>
<svg style="left:2035.8px;top:171.7px;" width="32" height="32" viewBox="0 0 32 32" preserveAspectRatio="none"><circle cx="16" cy="16" r="16" fill="#e2effc"/><path d="M6.4 16 H25.6" stroke="#71b5f0" stroke-width="4"/></svg>
<svg style="left:2080px;top:171.7px;" width="32" height="32" viewBox="0 0 32 32" preserveAspectRatio="none"><circle cx="16" cy="16" r="16" fill="#e2effc"/><rect x="7.4" y="7.4" width="17.2" height="17.2" fill="#71b5f0"/><path d="M7 7 L25 25" stroke="#e2effc" stroke-width="3.4"/></svg>
<svg style="left:2123.8px;top:171.7px;" width="32" height="32" viewBox="0 0 32 32" preserveAspectRatio="none"><circle cx="16" cy="16" r="16" fill="#e2effc"/><path d="M8.4 8.4 L23.6 23.6 M23.6 8.4 L8.4 23.6" stroke="#71b5f0" stroke-width="3.6"/></svg>
<div class="t" style="top:225.6px;line-height:26px;font-size:22px;color:#8c8c8c;letter-spacing:0.4px;left:853.2px;">ID:</div>
<div style="left:894px;top:220.4px;width:72px;height:35px;background:#fff;border:2px solid #e2e2e2;"></div>
<div class="t" style="top:226.0px;line-height:26px;font-size:22px;color:#9a9a9a;letter-spacing:-0.435px;left:900.5px;">3249</div>
<div style="left:974px;top:218.4px;width:102px;height:39.4px;background:#f5f5f5;border:2px solid #dedede;"></div>
<svg style="left:979.8px;top:224px;" width="28" height="28" viewBox="0 0 28 28" preserveAspectRatio="none"><path d="M1 1 H21.5 L27 6.5 V27 H1 Z" fill="url(#gSave)" stroke="#58a030" stroke-width="1"/><rect x="7" y="1.5" width="14" height="8" fill="#fff"/><rect x="17.3" y="3" width="2.6" height="4.6" fill="#555"/><rect x="5.5" y="15" width="17" height="11.5" fill="#fff"/></svg>
<div class="t" style="top:225.8px;line-height:26px;font-size:22px;color:#444;letter-spacing:-0.836px;left:1014.6px;">Save</div>
<div style="left:1084px;top:224px;width:30px;height:30px;background:#fff;border:2.6px solid #9c9c9c;border-radius:3px;box-shadow:0 0 2px rgba(0,0,0,.35), inset 0 0 1px rgba(0,0,0,.3);"></div>
<div style="left:1122px;top:224.2px;width:2px;height:27.6px;background:#cfcfcf;"></div>
<svg style="left:1139.8px;top:224.2px;" width="28" height="28" viewBox="0 0 28 28" preserveAspectRatio="none"><path d="M3.6 8.6 C6 0.2 17.8 -2 23 6.4 L18.6 10.4 C15.8 5.8 10.8 6.4 9 10.6 Z" fill="url(#gRef)" stroke="#4a76d6" stroke-width=".8"/><path d="M27.4 3.2 V14.4 H16 Z" fill="#b2d2fa" stroke="#4f7cdc" stroke-width="1.6" stroke-linejoin="round"/><g transform="rotate(180 14 13.8)"><path d="M3.6 8.6 C6 0.2 17.8 -2 23 6.4 L18.6 10.4 C15.8 5.8 10.8 6.4 9 10.6 Z" fill="url(#gRef)" stroke="#4a76d6" stroke-width=".8"/><path d="M27.4 3.2 V14.4 H16 Z" fill="#b2d2fa" stroke="#4f7cdc" stroke-width="1.6" stroke-linejoin="round"/></g></svg>
<div style="left:1184px;top:224.2px;width:2px;height:27.6px;background:#cfcfcf;"></div>
<svg style="left:1201px;top:223.6px;" width="30" height="28" viewBox="0 0 30 28" preserveAspectRatio="none"><path d="M20 25.6 C28 22.6 32.4 11 23.8 2.6 L18.6 7.6 C23.2 12 23.4 18.8 20 25.6 Z" fill="#7cc250" stroke="#62a83c" stroke-width=".7"/><path d="M12.6 0.6 H25 L13.2 11.4 Z" fill="#c6f4a2" stroke="#74b84c" stroke-width="1.4" stroke-linejoin="round"/><g transform="rotate(180 15 13.8)"><path d="M20 25.6 C28 22.6 32.4 11 23.8 2.6 L18.6 7.6 C23.2 12 23.4 18.8 20 25.6 Z" fill="#dc5c34" stroke="#cc4a26" stroke-width=".7"/><path d="M12.6 0.6 H25 L13.2 11.4 Z" fill="#f6b080" stroke="#e47444" stroke-width="1.4" stroke-linejoin="round"/></g></svg>
<div style="left:1246px;top:224.2px;width:2px;height:27.6px;background:#cfcfcf;"></div>
<svg style="left:1269.4px;top:226px;" width="13" height="22.2" viewBox="0 0 13 22.2" preserveAspectRatio="none"><path d="M13 0 L0 11.1 L13 22.2 Z" fill="url(#gTriL)"/></svg>
<svg style="left:1323.6px;top:226px;" width="13" height="22.2" viewBox="0 0 13 22.2" preserveAspectRatio="none"><path d="M0 0 L13 11.1 L0 22.2 Z" fill="url(#gTriR)"/></svg>
<div style="left:1359.8px;top:224.2px;width:2px;height:27.6px;background:#cfcfcf;"></div>
<svg style="left:1378px;top:224px;" width="28" height="28" viewBox="0 0 28 28" preserveAspectRatio="none"><g opacity="1"><rect x="0.5" y="0.5" width="27" height="27" rx="2" fill="url(#gAdd)" stroke="#6ea858" stroke-width="1.4"/><rect x="3" y="3" width="22" height="22" fill="none" stroke="#d4f4c0" stroke-width="1" opacity=".7"/><path d="M11.3 5.5h5.4v5.8h5.8v5.4h-5.8v5.8h-5.4v-5.8H5.5v-5.4h5.8z" fill="#fff" stroke="#8cc870" stroke-width=".8"/></g></svg>
<svg style="left:1431.9px;top:226.3px;" width="24.3" height="24.3" viewBox="0 0 24.3 24.3" preserveAspectRatio="none"><path d="M5.2 0 L12.15 6.95 L19.1 0 L24.3 5.2 L17.35 12.15 L24.3 19.1 L19.1 24.3 L12.15 17.35 L5.2 24.3 L0 19.1 L6.95 12.15 L0 5.2 Z" fill="url(#gX)" stroke="#d4566e" stroke-width=".6" opacity=".9"/></svg>
<svg style="left:1482px;top:224px;" width="28" height="28" viewBox="0 0 28 28" preserveAspectRatio="none"><rect x="12.8" y="12.8" width="14.4" height="14.4" fill="#f0bcbc" stroke="#d6402c" stroke-width="1.8"/><rect x="0.8" y="0.8" width="15" height="15" fill="#8cd860" stroke="#6cc040" stroke-width="1.2"/></svg>
<svg style="left:1533.8px;top:224px;" width="28" height="28" viewBox="0 0 28 28" preserveAspectRatio="none"><path d="M1.8 17 V26.4 H26.2 V17" fill="none" stroke="#10cc48" stroke-width="3.4"/><path d="M14 0.4 L22 9 H17.4 V17 H10.6 V9 H6 Z" fill="#10a8f0" stroke="#0890d8" stroke-width=".6"/></svg>
<div style="left:1577.8px;top:224.2px;width:2px;height:27.6px;background:#cfcfcf;"></div>
<div class="t" style="top:225.4px;line-height:26px;font-size:22px;color:#9a9a9a;letter-spacing:0.094px;left:1925.0px;">Row #</div>
<div style="left:2006px;top:220.4px;width:87.4px;height:35px;background:#fff;border:2px solid #e2e2e2;"></div>
<div class="t" style="top:226.4px;line-height:26px;font-size:22px;color:#9a9a9a;left:2011.0px;">2</div>
<svg style="left:2068px;top:227px;" width="17" height="22" viewBox="0 0 17 22" preserveAspectRatio="none"><path d="M0 9 L8.5 0.6 L17 9 Z M0 13 L8.5 21.4 L17 13 Z" fill="#c4c4c4"/></svg>
<div class="t" style="top:225.2px;line-height:26px;font-size:22px;color:#444;letter-spacing:0.013px;left:2104.0px;">of 1</div>
<div style="left:844px;top:263.5px;width:1312px;height:2px;background:#cdcdcd;"></div>
<div style="left:2136px;top:266px;width:20px;height:1036px;background:#f1f1f1;"></div>
<div style="left:2136px;top:266px;width:20px;height:564px;background:#555;"></div>
<div style="left:0;top:0;width:3000px;height:1302px;overflow:hidden">
<div style="left:864px;top:286px;width:1252px;height:44px;background:#e5fbe0;border:2px solid #b9c3f4;"></div>
<div class="t" style="top:292.6px;line-height:30px;font-size:25px;color:#111;letter-spacing:-0.616px;left:1425.4px;">Grid column</div>
<div class="t" style="top:339.1px;line-height:26px;font-size:22px;color:#9a9a9a;letter-spacing:-0.054px;left:863.0px;">Section:</div>
<div style="left:1490px;top:332.4px;width:626px;height:37.6px;background:#fff;border:2px solid #e3e3e3;box-shadow:0 0 0 1px rgba(0,0,0,.04);"></div>
<svg style="left:2087.4px;top:346px;" width="17" height="8.6" viewBox="0 0 17 8.6" preserveAspectRatio="none"><path d="M0 0 H17 L8.5 8.6 Z" fill="#cfcfcf"/></svg>
<div class="t" style="top:338.1px;line-height:26px;font-size:22px;color:#b4b4b4;letter-spacing:-0.61px;left:1496.4px;">Teachers</div>
<svg style="left:1455.6px;top:340px;" width="29" height="26" viewBox="0 0 29 26" preserveAspectRatio="none"><g opacity="0.42"><path d="M0.8 20.2 L2 15.6 L16.8 0.8 L20.4 4.4 L5.6 19.2 Z" fill="url(#gPen)" stroke="#5e9c3c" stroke-width="1"/><path d="M0.8 20.2 L2 15.6 L5.6 19.2 Z" fill="#3a3a3a"/><path d="M3.4 15.6 L16.4 2.6" stroke="#d0f4b0" stroke-width="1.2"/><path d="M14 17.6 H21.4 V14.2 L28.4 19.8 L21.4 25.4 V22 H14 Z" fill="#5c98e8" stroke="#3c78d0" stroke-width=".7"/></g></svg>
<div style="left:864px;top:371.8px;width:1252px;height:2px;background:#c8cff6;"></div>
<div class="t" style="top:383.3px;line-height:26px;font-size:22px;color:#333;letter-spacing:0.043px;left:863.0px;">Field:</div>
<div style="left:1490px;top:376.6px;width:626px;height:37.6px;background:#fff;border:2px solid #c9c9c9;box-shadow:0 0 0 1px rgba(0,0,0,.04);"></div>
<svg style="left:2087.4px;top:390.2px;" width="17" height="8.6" viewBox="0 0 17 8.6" preserveAspectRatio="none"><path d="M0 0 H17 L8.5 8.6 Z" fill="#8a8a8a"/></svg>
<div class="t" style="top:382.3px;line-height:26px;font-size:22px;color:#111;letter-spacing:0.033px;left:1496.4px;">Youtube introduction video link</div>
<svg style="left:1414px;top:382.2px;" width="27.8" height="27.8" viewBox="0 0 28 28" preserveAspectRatio="none"><g opacity="0.42"><rect x="0.5" y="0.5" width="27" height="27" rx="2" fill="url(#gAdd)" stroke="#6ea858" stroke-width="1.4"/><rect x="3" y="3" width="22" height="22" fill="none" stroke="#d4f4c0" stroke-width="1" opacity=".7"/><path d="M11.3 5.5h5.4v5.8h5.8v5.4h-5.8v5.8h-5.4v-5.8H5.5v-5.4h5.8z" fill="#fff" stroke="#8cc870" stroke-width=".8"/></g></svg>
<svg style="left:1455.6px;top:384.2px;" width="29" height="26" viewBox="0 0 29 26" preserveAspectRatio="none"><g opacity="1"><path d="M0.8 20.2 L2 15.6 L16.8 0.8 L20.4 4.4 L5.6 19.2 Z" fill="url(#gPen)" stroke="#5e9c3c" stroke-width="1"/><path d="M0.8 20.2 L2 15.6 L5.6 19.2 Z" fill="#3a3a3a"/><path d="M3.4 15.6 L16.4 2.6" stroke="#d0f4b0" stroke-width="1.2"/><path d="M14 17.6 H21.4 V14.2 L28.4 19.8 L21.4 25.4 V22 H14 Z" fill="#5c98e8" stroke="#3c78d0" stroke-width=".7"/></g></svg>
<div style="left:864px;top:416px;width:1252px;height:2px;background:#c8cff6;"></div>
<div class="t" style="top:427.5px;line-height:26px;font-size:22px;color:#333;letter-spacing:0.004px;left:863.0px;">Parent column:</div>
<div style="left:1490px;top:420.8px;width:626px;height:37.6px;background:#fff;border:2px solid #c9c9c9;box-shadow:0 0 0 1px rgba(0,0,0,.04);"></div>
<svg style="left:2087.4px;top:434.4px;" width="17" height="8.6" viewBox="0 0 17 8.6" preserveAspectRatio="none"><path d="M0 0 H17 L8.5 8.6 Z" fill="#8a8a8a"/></svg>
<div class="t" style="top:426.5px;line-height:26px;font-size:22px;color:#111;letter-spacing:-0.109px;left:1495.4px;">Contact details</div>
<svg style="left:1455.6px;top:428.4px;" width="29" height="26" viewBox="0 0 29 26" preserveAspectRatio="none"><g opacity="1"><path d="M0.8 20.2 L2 15.6 L16.8 0.8 L20.4 4.4 L5.6 19.2 Z" fill="url(#gPen)" stroke="#5e9c3c" stroke-width="1"/><path d="M0.8 20.2 L2 15.6 L5.6 19.2 Z" fill="#3a3a3a"/><path d="M3.4 15.6 L16.4 2.6" stroke="#d0f4b0" stroke-width="1.2"/><path d="M14 17.6 H21.4 V14.2 L28.4 19.8 L21.4 25.4 V22 H14 Z" fill="#5c98e8" stroke="#3c78d0" stroke-width=".7"/></g></svg>
<div style="left:864px;top:460.3px;width:1252px;height:44px;background:#e5fbe0;border:2px solid #b9c3f4;"></div>
<div class="t" style="top:468.0px;line-height:26px;font-size:22px;color:#111;letter-spacing:-0.147px;left:1415.7px;">Show in panels</div>
<div class="t" style="top:558.6px;line-height:26px;font-size:22px;color:#333;letter-spacing:0.16px;left:863.0px;">Grid:</div>
<svg style="left:1488.8px;top:505.6px;" width="32" height="32" viewBox="0 0 32 32" preserveAspectRatio="none"><circle cx="16" cy="16" r="15.4" fill="none" stroke="#dcdcdc" stroke-width="1.2"/><circle cx="16" cy="16" r="13.4" fill="#fff" stroke="url(#gRadio)" stroke-width="3"/><circle cx="16" cy="16" r="7.6" fill="#a2a2a2"/></svg>
<svg style="left:1525px;top:510.6px;" width="24" height="22" viewBox="0 0 24 22" preserveAspectRatio="none"><rect x="1" y="1" width="22" height="20" fill="#fff" stroke="#5c98f4" stroke-width="1.8"/><rect x="7.4" y="1.8" width="14.8" height="5" fill="#bfe6ff"/><path d="M7 1 V21 M1 7.6 H23 M1 14.2 H23" stroke="#5c98f4" stroke-width="1.6" fill="none"/></svg>
<div class="t" style="top:509.4px;line-height:26px;font-size:22px;color:#444;letter-spacing:-0.117px;left:1556.8px;">Turned on</div>
<svg style="left:1488.8px;top:537.5px;" width="32" height="32" viewBox="0 0 32 32" preserveAspectRatio="none"><circle cx="16" cy="16" r="15.4" fill="none" stroke="#dcdcdc" stroke-width="1.2"/><circle cx="16" cy="16" r="13.4" fill="#fff" stroke="url(#gRadio)" stroke-width="3"/></svg>
<svg style="left:1525px;top:542.5px;" width="24" height="22" viewBox="0 0 24 22" preserveAspectRatio="none"><rect x="1" y="1" width="22" height="20" fill="#fff" stroke="#7c7c7c" stroke-width="1.8"/><rect x="7.4" y="1.8" width="14.8" height="5" fill="#e8e8e8"/><path d="M7 1 V21 M1 7.6 H23 M1 14.2 H23" stroke="#7c7c7c" stroke-width="1.6" fill="none"/></svg>
<div class="t" style="top:541.3px;line-height:26px;font-size:22px;color:#444;letter-spacing:0.024px;left:1555.8px;">Hidden</div>
<svg style="left:1488.8px;top:569.6px;" width="32" height="32" viewBox="0 0 32 32" preserveAspectRatio="none"><circle cx="16" cy="16" r="15.4" fill="none" stroke="#dcdcdc" stroke-width="1.2"/><circle cx="16" cy="16" r="13.4" fill="#fff" stroke="url(#gRadio)" stroke-width="3"/></svg>
<svg style="left:1525px;top:574.6px;" width="24" height="22" viewBox="0 0 24 22" preserveAspectRatio="none"><rect x="1" y="1" width="22" height="20" fill="#fff" stroke="#5c98f4" stroke-width="1.8"/><rect x="1.8" y="1.8" width="20.4" height="5.4" fill="#bfe6ff"/><path d="M1 7.6 H23" stroke="#5c98f4" stroke-width="1.6"/><path d="M5.4 12 H18.6 M5.4 16.2 H18.6" stroke="#5c98f4" stroke-width="1.6"/></svg>
<div class="t" style="top:573.4px;line-height:26px;font-size:22px;color:#444;letter-spacing:0.092px;left:1555.8px;">Hidden, but shown in row expander</div>
<svg style="left:1488.8px;top:601.5px;" width="32" height="32" viewBox="0 0 32 32" preserveAspectRatio="none"><circle cx="16" cy="16" r="15.4" fill="none" stroke="#dcdcdc" stroke-width="1.2"/><circle cx="16" cy="16" r="13.4" fill="#fff" stroke="url(#gRadio)" stroke-width="3"/></svg>
<div class="t" style="top:605.3px;line-height:26px;font-size:22px;color:#444;letter-spacing:-0.139px;left:1556.8px;">Turned off</div>
<div style="left:864px;top:633.4px;width:1252px;height:2px;background:#c8cff6;"></div>
<div class="t" style="top:644.8px;line-height:26px;font-size:22px;color:#333;letter-spacing:-0.11px;left:863.0px;">Calendar:</div>
<div style="left:1490px;top:638.1px;width:626px;height:37.6px;background:#fff;border:2px solid #c9c9c9;box-shadow:0 0 0 1px rgba(0,0,0,.04);"></div>
<svg style="left:2087.4px;top:651.7px;" width="17" height="8.6" viewBox="0 0 17 8.6" preserveAspectRatio="none"><path d="M0 0 H17 L8.5 8.6 Z" fill="#8a8a8a"/></svg>
<div class="t" style="top:643.8px;line-height:26px;font-size:22px;color:#111;letter-spacing:-0.017px;left:1530.0px;">Turned off</div>
<svg style="left:966.4px;top:650.7px;" width="17" height="15" viewBox="0 0 17 15" preserveAspectRatio="none"><path d="M0 1.2 H17 M0 7.5 H17 M0 13.8 H17" stroke="#444" stroke-width="1.6"/></svg>
<div style="left:864px;top:677.5px;width:1252px;height:2px;background:#c8cff6;"></div>
<div class="t" style="top:688.7px;line-height:26px;font-size:22px;color:#333;letter-spacing:-0.041px;left:863.0px;">Gallery:</div>
<div style="left:1490px;top:682px;width:626px;height:37.6px;background:#fff;border:2px solid #c9c9c9;box-shadow:0 0 0 1px rgba(0,0,0,.04);"></div>
<svg style="left:2087.4px;top:695.6px;" width="17" height="8.6" viewBox="0 0 17 8.6" preserveAspectRatio="none"><path d="M0 0 H17 L8.5 8.6 Z" fill="#8a8a8a"/></svg>
<div class="t" style="top:687.7px;line-height:26px;font-size:22px;color:#111;letter-spacing:-0.017px;left:1530.0px;">Turned off</div>
<div style="left:864px;top:722.2px;width:1252px;height:43.7px;background:#e5fbe0;border:2px solid #b9c3f4;"></div>
<div class="t" style="top:729.9px;line-height:26px;font-size:22px;color:#111;letter-spacing:-0.186px;left:1453.9px;">Header</div>
<div class="t" style="top:775.2px;line-height:26px;font-size:22px;color:#333;letter-spacing:0.071px;left:863.0px;">Group:</div>
<div style="left:1490px;top:768.5px;width:626px;height:37.6px;background:#fff;border:2px solid #c9c9c9;box-shadow:0 0 0 1px rgba(0,0,0,.04);"></div>
<svg style="left:2087.4px;top:782.1px;" width="17" height="8.6" viewBox="0 0 17 8.6" preserveAspectRatio="none"><path d="M0 0 H17 L8.5 8.6 Z" fill="#8a8a8a"/></svg>
<div class="t" style="top:774.2px;line-height:26px;font-size:22px;color:#111;letter-spacing:-0.222px;left:1495.4px;">Normal</div>
<div style="left:864px;top:807.9px;width:1252px;height:2px;background:#c8cff6;"></div>
<div class="t" style="top:819.1px;line-height:26px;font-size:22px;color:#333;letter-spacing:1.079px;left:862.0px;">Icon:</div>
<div style="left:1490px;top:812.4px;width:626px;height:37.6px;background:#fff;border:2px solid #c9c9c9;box-shadow:0 0 0 1px rgba(0,0,0,.04);"></div>
<svg style="left:2087.4px;top:826px;" width="17" height="8.6" viewBox="0 0 17 8.6" preserveAspectRatio="none"><path d="M0 0 H17 L8.5 8.6 Z" fill="#8a8a8a"/></svg>
<svg style="left:1497.5px;top:822.4px;" width="31" height="21" viewBox="0 0 31 21" preserveAspectRatio="none"><rect x="0" y="0" width="31" height="21" rx="4.4" fill="url(#gYt)"/><path d="M11.6 5.2 L21.4 10.5 L11.6 15.8 Z" fill="#fff"/></svg>
<div class="t" style="top:818.1px;line-height:26px;font-size:22px;color:#111;letter-spacing:0.053px;left:1534.2px;">youtube.png</div>
<div style="left:864px;top:851.8px;width:1252px;height:2px;background:#c8cff6;"></div>
<div class="t" style="top:863.2px;line-height:26px;font-size:22px;color:#333;letter-spacing:-0.243px;left:863.0px;">Rename:</div>
<div style="left:1490px;top:856.5px;width:626px;height:37.6px;background:#fff;border:2px solid #c9c9c9;box-shadow:0 0 0 1px rgba(0,0,0,.04);"></div>
<div style="left:864px;top:895.9px;width:1252px;height:2px;background:#c8cff6;"></div>
<div class="t" style="top:921.2px;line-height:26px;font-size:22px;color:#333;letter-spacing:0.301px;left:864.0px;">Tooltip:</div>
<div style="left:1490px;top:900.7px;width:626px;height:62.4px;background:#fff;border:2px solid #c9c9c9;box-shadow:0 0 0 1px rgba(0,0,0,.04);"></div>
<div style="left:864px;top:965.6px;width:1252px;height:44.1px;background:#e5fbe0;border:2px solid #b9c3f4;"></div>
<div class="t" style="top:973.3px;line-height:26px;font-size:22px;color:#111;letter-spacing:-0.475px;left:1463.6px;">Value</div>
<div class="t" style="top:1018.9px;line-height:26px;font-size:22px;color:#333;letter-spacing:0.105px;left:863.0px;">Cell editor:</div>
<div style="left:1490px;top:1012.2px;width:626px;height:37.6px;background:#fff;border:2px solid #c9c9c9;box-shadow:0 0 0 1px rgba(0,0,0,.04);"></div>
<svg style="left:2087.4px;top:1025.8px;" width="17" height="8.6" viewBox="0 0 17 8.6" preserveAspectRatio="none"><path d="M0 0 H17 L8.5 8.6 Z" fill="#8a8a8a"/></svg>
<div style="left:1497.6px;top:1023px;width:28.4px;height:18px;background:#d2d2d2;"></div>
<div class="t" style="top:1017.9px;line-height:26px;font-size:22px;color:#111;letter-spacing:-0.017px;left:1530.0px;">Turned off</div>
<div style="left:864px;top:1051.6px;width:1252px;height:2px;background:#c8cff6;"></div>
<div class="t" style="top:1063.0px;line-height:26px;font-size:22px;color:#333;letter-spacing:0.048px;left:864.0px;">Value template:</div>
<div style="left:1490px;top:1056.3px;width:626px;height:37.6px;background:#fff;border:2px solid #c9c9c9;box-shadow:0 0 0 1px rgba(0,0,0,.04);"></div>
<div class="t" style="top:1062.0px;line-height:26px;font-size:22px;color:#8c8c8c;letter-spacing:0.207px;left:1496.4px;">{someField1} - {someField2}{. SomeField3}</div>
<div style="left:864px;top:1095.7px;width:1252px;height:2px;background:#c8cff6;"></div>
<div class="t" style="top:1106.9px;line-height:26px;font-size:22px;color:#333;letter-spacing:0.201px;left:864.0px;">Tooltip template:</div>
<div style="left:1490px;top:1100.2px;width:626px;height:37.6px;background:#fff;border:2px solid #c9c9c9;box-shadow:0 0 0 1px rgba(0,0,0,.04);"></div>
<div style="left:864px;top:1139.6px;width:1252px;height:44.3px;background:#e5fbe0;border:2px solid #b9c3f4;"></div>
<div class="t" style="top:1147.3px;line-height:26px;font-size:22px;color:#111;letter-spacing:-0.417px;left:1447.4px;">Features</div>
<div class="t" style="top:1192.8px;line-height:26px;font-size:22px;color:#333;letter-spacing:-0.12px;left:863.0px;">Sizing:</div>
<div style="left:1490px;top:1186.1px;width:626px;height:37.6px;background:#fff;border:2px solid #c9c9c9;box-shadow:0 0 0 1px rgba(0,0,0,.04);"></div>
<svg style="left:2087.4px;top:1199.7px;" width="17" height="8.6" viewBox="0 0 17 8.6" preserveAspectRatio="none"><path d="M0 0 H17 L8.5 8.6 Z" fill="#8a8a8a"/></svg>
<div class="t" style="top:1191.8px;line-height:26px;font-size:22px;color:#111;letter-spacing:-0.174px;left:1530.0px;">Auto</div>
<div style="left:864px;top:1225.5px;width:1252px;height:2px;background:#c8cff6;"></div>
<div class="t" style="top:1236.9px;line-height:26px;font-size:22px;color:#333;letter-spacing:0.081px;left:862.0px;">If cell changed, refresh that row entirely via separate XHR:</div>
<div style="left:1490px;top:1230.2px;width:626px;height:37.6px;background:#fff;border:2px solid #c9c9c9;box-shadow:0 0 0 1px rgba(0,0,0,.04);"></div>
<svg style="left:2087.4px;top:1243.8px;" width="17" height="8.6" viewBox="0 0 17 8.6" preserveAspectRatio="none"><path d="M0 0 H17 L8.5 8.6 Z" fill="#8a8a8a"/></svg>
<div style="left:1497.6px;top:1241px;width:28.4px;height:18px;background:#d2d2d2;"></div>
<div class="t" style="top:1235.9px;line-height:26px;font-size:22px;color:#111;letter-spacing:-0.988px;left:1529.0px;">No</div>
<div style="left:864px;top:1269.6px;width:1252px;height:2px;background:#c8cff6;"></div>
<div class="t" style="top:1281.1px;line-height:26px;font-size:22px;color:#333;letter-spacing:-0.07px;left:863.0px;">Exclude from Excel-export:</div>
<div style="left:1490px;top:1274.4px;width:626px;height:37.6px;background:#fff;border:2px solid #c9c9c9;box-shadow:0 0 0 1px rgba(0,0,0,.04);"></div>
<svg style="left:2087.4px;top:1288px;" width="17" height="8.6" viewBox="0 0 17 8.6" preserveAspectRatio="none"><path d="M0 0 H17 L8.5 8.6 Z" fill="#8a8a8a"/></svg>
<div class="t" style="top:1280.1px;line-height:26px;font-size:22px;color:#111;letter-spacing:-0.988px;left:1529.0px;">No</div>
</div>
<div style="left:836px;top:1302px;width:1328px;height:8px;background:#71b5f0;"></div>
<div style="left:844px;top:1302px;width:1312px;height:0px;"></div>
<svg style="left:411.6px;top:1438px;" width="21" height="22.6" viewBox="0 0 21 22.6" preserveAspectRatio="none"><rect x="0" y="0" width="3.4" height="22.6" fill="#a9bcec"/><path d="M21 0 L5 11.3 L21 22.6 Z" fill="#a9bcec"/></svg>
<svg style="left:458px;top:1438px;" width="13.6" height="22.6" viewBox="0 0 13.6 22.6" preserveAspectRatio="none"><path d="M13.6 0 L0 11.3 L13.6 22.6 Z" fill="#a9bcec"/></svg>
<div style="left:492px;top:1435.6px;width:2px;height:27.6px;background:#d2d2d2;"></div>
<div class="t" style="top:1436.2px;line-height:26px;font-size:22px;color:#6a6a6a;letter-spacing:-1.182px;left:509.3px;">Page</div>
<div style="left:578.6px;top:1431px;width:98.8px;height:35.6px;background:#fff;border:2px solid #cacaca;"></div>
<div class="t" style="top:1436.2px;line-height:26px;font-size:22px;color:#555;left:584.8px;">1</div>
<div class="t" style="top:1436.2px;line-height:26px;font-size:22px;color:#444;letter-spacing:0.08px;left:690.0px;">of 1</div>
<div style="left:744.4px;top:1435.6px;width:2px;height:27.6px;background:#d2d2d2;"></div>
<svg style="left:765.4px;top:1438px;" width="13.6" height="22.6" viewBox="0 0 13.6 22.6" preserveAspectRatio="none"><path d="M0 0 L13.6 11.3 L0 22.6 Z" fill="#7c8fe6"/></svg>
<svg style="left:805.6px;top:1438px;" width="20" height="22.6" viewBox="0 0 20 22.6" preserveAspectRatio="none"><rect x="16.6" y="0" width="3.4" height="22.6" fill="#7c8fe6"/><path d="M0 0 L15.4 11.3 L0 22.6 Z" fill="#7c8fe6"/></svg>
<div style="left:842.2px;top:1435.6px;width:2px;height:27.6px;background:#d2d2d2;"></div>
<svg style="left:855.4px;top:1435.4px;" width="29" height="29" viewBox="0 0 28 28" preserveAspectRatio="none"><path d="M3.6 8.6 C6 0.2 17.8 -2 23 6.4 L18.6 10.4 C15.8 5.8 10.8 6.4 9 10.6 Z" fill="url(#gRef)" stroke="#4a76d6" stroke-width=".8"/><path d="M27.4 3.2 V14.4 H16 Z" fill="#b2d2fa" stroke="#4f7cdc" stroke-width="1.6" stroke-linejoin="round"/><g transform="rotate(180 14 13.8)"><path d="M3.6 8.6 C6 0.2 17.8 -2 23 6.4 L18.6 10.4 C15.8 5.8 10.8 6.4 9 10.6 Z" fill="url(#gRef)" stroke="#4a76d6" stroke-width=".8"/><path d="M27.4 3.2 V14.4 H16 Z" fill="#b2d2fa" stroke="#4f7cdc" stroke-width="1.6" stroke-linejoin="round"/></g></svg>
<div style="left:896.4px;top:1435.6px;width:2px;height:27.6px;background:#d2d2d2;"></div>
<svg style="left:908.4px;top:1436.6px;" width="30" height="26" viewBox="0 0 30 26" preserveAspectRatio="none"><path d="M0.6 1.4 H7.6 L14.6 9.6 L22.4 0.6 H29.4 L18.4 13 L29.4 25.4 H22.4 L14.6 16.6 L7 25.4 H0.6 L11 13 Z" fill="#4cb848" stroke="#2c9830" stroke-width=".8"/><path d="M4 2.4 L14.8 14 L5 24.6" stroke="#a4e49c" stroke-width="1.4" fill="none"/></svg>
<svg style="left:953.8px;top:1436px;" width="27" height="27" viewBox="0 0 27 27" preserveAspectRatio="none"><path d="M1.4 0 V27" stroke="#4cb848" stroke-width="2.6"/><path d="M2.8 25.6 L9 21.6 L2.8 19 Z" fill="#4cb848"/><rect x="7" y="2.4" width="13" height="6.4" fill="#fff" stroke="#5c98f4" stroke-width="1.8"/><rect x="7" y="9.6" width="19" height="6.4" fill="#fff" stroke="#5c98f4" stroke-width="1.8"/></svg>
<div class="t" style="top:1436.2px;line-height:26px;font-size:22px;color:#555;letter-spacing:0.106px;left:2757.4px;">Displaying 1 - 14 of 14</div>
<div style="left:20px;top:1409px;width:599.6px;height:44.7px;background:rgba(79,140,189,.71);"></div>
<div class="t" style="top:1417.5px;line-height:30px;font-size:25px;color:#fff;letter-spacing:-0.62px;left:26.8px;">Connected in 592 ms</div>
<svg style="left:596.4px;top:1417px;" width="16" height="15.4" viewBox="0 0 16 15.4" preserveAspectRatio="none"><path d="M2 2 L14 13.4 M14 2 L2 13.4" stroke="#fff" stroke-width="3.6" stroke-linecap="butt"/></svg>
<svg style="left:1953px;top:672.9px;" width="28.2" height="40.5" viewBox="0 0 32 46" preserveAspectRatio="none"><path d="M1.4 1.6 V38.4 L10 30.2 L16.4 44.4 L22.4 41.6 L16.2 27.8 L28.6 27.6 Z" fill="#fff" stroke="#1a1a1a" stroke-width="1.5" stroke-linejoin="miter"/></svg>
</body></html>
